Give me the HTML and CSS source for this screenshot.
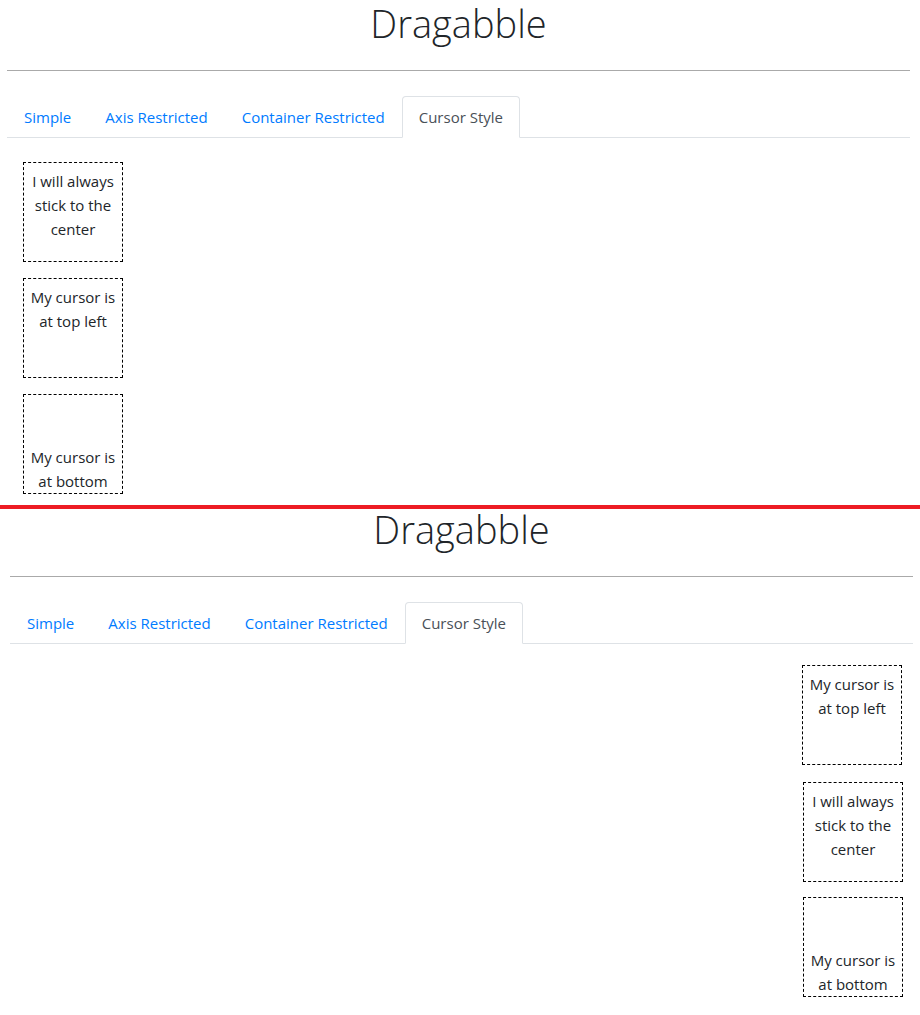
FILE: index.html
```html
<!DOCTYPE html>
<html lang="en">
<head>
<meta charset="utf-8">
<title>Dragabble</title>
<link rel="stylesheet" href="styles.css">
</head>
<body>
<main class="page">
  <section class="panel panel--first">
    <h1 class="title">Dragabble</h1>
    <hr class="rule">
    <ul class="tabs">
      <li class="tabs__item"><a class="tabs__link" href="#">Simple</a></li>
      <li class="tabs__item"><a class="tabs__link" href="#">Axis Restricted</a></li>
      <li class="tabs__item"><a class="tabs__link" href="#">Container Restricted</a></li>
      <li class="tabs__item"><a class="tabs__link tabs__link--active" href="#">Cursor Style</a></li>
    </ul>
    <div class="stage stage--left">
      <div class="box">I will always stick to the center</div>
      <div class="box">My cursor is at top left</div>
      <div class="box box--bottom">My cursor is at bottom</div>
    </div>
  </section>
  <div class="divider"></div>
  <section class="panel panel--second">
    <h1 class="title">Dragabble</h1>
    <hr class="rule">
    <ul class="tabs">
      <li class="tabs__item"><a class="tabs__link" href="#">Simple</a></li>
      <li class="tabs__item"><a class="tabs__link" href="#">Axis Restricted</a></li>
      <li class="tabs__item"><a class="tabs__link" href="#">Container Restricted</a></li>
      <li class="tabs__item"><a class="tabs__link tabs__link--active" href="#">Cursor Style</a></li>
    </ul>
    <div class="stage stage--right">
      <div class="box box--first box--nudge">My cursor is at top left</div>
      <div class="box box--second">I will always stick to the center</div>
      <div class="box box--bottom box--third">My cursor is at bottom</div>
    </div>
  </section>
</main>
</body>
</html>
```
FILE: styles.css
```css
* { box-sizing: border-box; }
html, body { margin: 0; padding: 0; background: #fff; }
body {
  font-family: "Open Sans", "Noto Sans", sans-serif;
  font-size: 15px;
  line-height: 24px;
  color: #212529;
}
.page { width: 920px; }
.panel { display: flex; flex-direction: column; }
.panel--first { height: 505px; padding: 0 10px 0 7px; }
.panel--second { height: 506px; margin-top: -3px; padding: 0 7px 0 10px; }
.divider { position: relative; z-index: 1; height: 4px; background: #ed1c24; }
.title {
  margin: 0;
  font-size: 38px;
  line-height: 46px;
  font-weight: 300;
  text-align: center;
  color: #212529;
}
.rule {
  margin: 24px 0 0;
  border: 0;
  border-top: 1px solid #aaaaaa;
  height: 0;
}
.tabs {
  list-style: none;
  margin: 25px 0 0;
  padding: 0;
  display: flex;
  border-bottom: 1px solid #dee2e6;
}
.tabs__item { margin-bottom: -1px; }
.tabs__link {
  display: block;
  padding: 8px 16px;
  border: 1px solid transparent;
  border-radius: 4px 4px 0 0;
  color: #007bff;
  text-decoration: none;
}
.tabs__link--active {
  color: #495057;
  background: #fff;
  border-color: #dee2e6 #dee2e6 #fff;
}
.stage { display: flex; flex-direction: column; }
.stage--left { margin-top: 24px; padding-left: 16px; gap: 16px; align-items: flex-start; }
.stage--right { padding-right: 10px; align-items: flex-end; }
.box {
  width: 100px;
  height: 100px;
  border: 1px dashed #000;
  padding: 6px 0 0;
  text-align: center;
}
.box--bottom {
  display: flex;
  flex-direction: column;
  justify-content: flex-end;
  padding: 0;
}
.box--first { margin-top: 21px; }
.box--nudge { margin-right: 1px; }
.box--second { margin-top: 17px; }
.box--third { margin-top: 15px; }
```
